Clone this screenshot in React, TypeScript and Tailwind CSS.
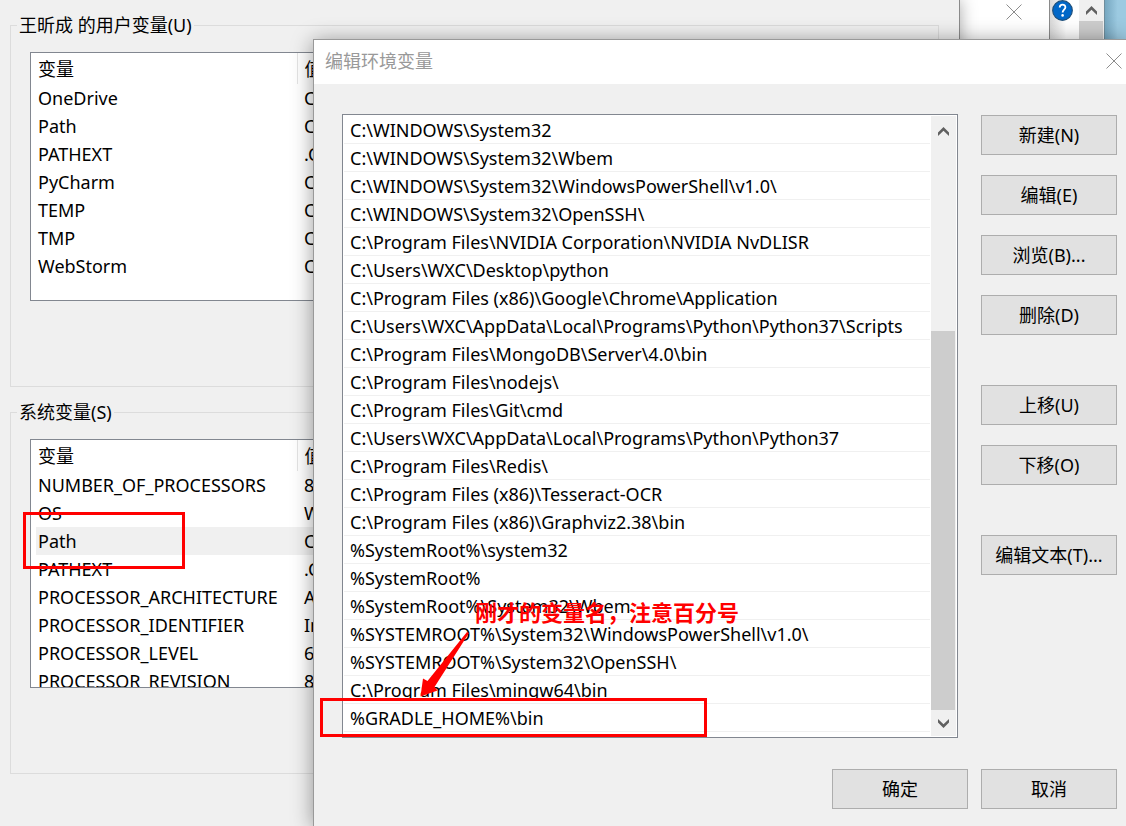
interface Variable {
  name: string
  value: string
  selected?: boolean
}

const USER_VARS: Variable[] = [
  { name: 'OneDrive', value: 'C' },
  { name: 'Path', value: 'C' },
  { name: 'PATHEXT', value: '.C' },
  { name: 'PyCharm', value: 'C' },
  { name: 'TEMP', value: 'C' },
  { name: 'TMP', value: 'C' },
  { name: 'WebStorm', value: 'C' },
]

const SYSTEM_VARS: Variable[] = [
  { name: 'NUMBER_OF_PROCESSORS', value: '8' },
  { name: 'OS', value: 'W' },
  { name: 'Path', value: 'C', selected: true },
  { name: 'PATHEXT', value: '.C' },
  { name: 'PROCESSOR_ARCHITECTURE', value: 'A' },
  { name: 'PROCESSOR_IDENTIFIER', value: 'In' },
  { name: 'PROCESSOR_LEVEL', value: '6' },
  { name: 'PROCESSOR_REVISION', value: '8' },
]

const PATHS = [
  'C:\\WINDOWS\\System32',
  'C:\\WINDOWS\\System32\\Wbem',
  'C:\\WINDOWS\\System32\\WindowsPowerShell\\v1.0\\',
  'C:\\WINDOWS\\System32\\OpenSSH\\',
  'C:\\Program Files\\NVIDIA Corporation\\NVIDIA NvDLISR',
  'C:\\Users\\WXC\\Desktop\\python',
  'C:\\Program Files (x86)\\Google\\Chrome\\Application',
  'C:\\Users\\WXC\\AppData\\Local\\Programs\\Python\\Python37\\Scripts',
  'C:\\Program Files\\MongoDB\\Server\\4.0\\bin',
  'C:\\Program Files\\nodejs\\',
  'C:\\Program Files\\Git\\cmd',
  'C:\\Users\\WXC\\AppData\\Local\\Programs\\Python\\Python37',
  'C:\\Program Files\\Redis\\',
  'C:\\Program Files (x86)\\Tesseract-OCR',
  'C:\\Program Files (x86)\\Graphviz2.38\\bin',
  '%SystemRoot%\\system32',
  '%SystemRoot%',
  '%SystemRoot%\\System32\\Wbem',
  '%SYSTEMROOT%\\System32\\WindowsPowerShell\\v1.0\\',
  '%SYSTEMROOT%\\System32\\OpenSSH\\',
  'C:\\Program Files\\mingw64\\bin',
  '%GRADLE_HOME%\\bin',
]

const ACTION_GROUPS = [
  ['新建(N)', '编辑(E)', '浏览(B)...', '删除(D)'],
  ['上移(U)', '下移(O)'],
  ['编辑文本(T)...'],
]

function CloseIcon() {
  return (
    <svg className="h-4 w-4" viewBox="0 0 16 16" fill="none" stroke="#8c8c8c" strokeWidth={1}>
      <path d="M.5 .5l15 15M15.5 .5l-15 15" />
    </svg>
  )
}

function Chevron({ down }: { down?: boolean }) {
  return (
    <svg className={`h-[9px] w-[11px] ${down ? 'rotate-180' : ''}`} viewBox="0 0 11 9" fill="#606060">
      <path d="M5.5 0L11 5.5V9L5.5 3.8L0 9V5.5z" />
    </svg>
  )
}

function DialogButton({ label }: { label: string }) {
  return (
    <button className="h-10 w-[136px] border border-[#adadad] bg-[#e1e1e1] hover:bg-[#e5f1fb]">
      {label}
    </button>
  )
}

function VariableGroup({ title, rows }: { title: string; rows: Variable[] }) {
  return (
    <fieldset className="min-w-0 border border-[#dcdcdc] pr-5 pb-[85px] pl-[19px]">
      <legend className="-ml-[13px] px-0.5 leading-6">{title}</legend>
      <div className="mt-[15px] h-[249px] overflow-hidden border border-[#828790] bg-white pl-[5px]">
        <table className="w-full table-fixed border-collapse text-left">
          <thead>
            <tr className="h-[31px]">
              <th className="w-[261px] border-r border-[#e5e5e5] py-0 pl-0.5 font-normal">变量</th>
              <th className="py-0 pl-[7px] font-normal">值</th>
            </tr>
          </thead>
          <tbody>
            {rows.map((row) => (
              <tr key={row.name} className={row.selected ? 'h-7 bg-[#f0f0f0]' : 'h-7'}>
                <td className="py-0 pl-0.5 leading-7">{row.name}</td>
                <td className="py-0 pl-[7px] leading-7">{row.value}</td>
              </tr>
            ))}
          </tbody>
        </table>
      </div>
    </fieldset>
  )
}

export default function App() {
  return (
    <div className="relative min-h-screen overflow-hidden bg-[#f0f0f0] font-['Noto_Sans','Noto_Sans_CJK_SC',sans-serif] text-lg leading-7 text-black">
      {/* Windows behind the dialog */}
      <div className="flex min-h-screen">
        <main className="z-10 flex min-w-0 flex-1 flex-col gap-[13px] border-r border-[#8a8a8a] bg-[#f0f0f0] pt-[13px] pr-5 pl-2.5 shadow-[0_0_16px_rgba(0,0,0,0.35)]">
          <VariableGroup title="王昕成 的用户变量(U)" rows={USER_VARS} />
          <VariableGroup title="系统变量(S)" rows={SYSTEM_VARS} />
        </main>
        <div className="flex w-[90px] justify-end border-r border-[#8a8a8a] bg-white pt-1 pr-[27px]">
          <button aria-label="关闭" className="h-4 w-4">
            <CloseIcon />
          </button>
        </div>
        <div className="flex w-[54px] justify-between bg-linear-to-r from-[#d8d8d8] to-white to-30% pl-[2px]">
          <button aria-label="帮助" className="h-[21px] w-[21px]">
            <svg className="h-[21px] w-[21px]" viewBox="0 0 21 21">
              <circle cx="10.5" cy="10.5" r="9.8" fill="#0067c8" stroke="#20517c" strokeWidth="1.2" />
              <path
                d="M7.7 7.5C7.8 3.7 13.4 3.8 13.4 7.2C13.4 9.4 10.6 9.8 10.6 12.4"
                fill="none"
                stroke="#fff"
                strokeWidth="1.8"
              />
              <circle cx="10.6" cy="15.4" r="1.3" fill="#fff" />
            </svg>
          </button>
          <div className="flex w-[25px] flex-col bg-[#f0f0f0]">
            <div className="flex h-[21px] shrink-0 items-center justify-center">
              <Chevron />
            </div>
            <div className="mr-px flex-1 bg-[#cdcdcd]" />
          </div>
        </div>
        <div className="w-[22px] border-l border-[#6f8d9c] bg-linear-to-r from-[#76a7c0] to-[#9ccae1] to-60%" />
      </div>

      {/* Edit dialog */}
      <section
        role="dialog"
        aria-labelledby="dialog-title"
        className="absolute top-[39px] right-0 bottom-0 left-[313px] z-20 flex flex-col border-t border-l border-[#999999] bg-[#f0f0f0] shadow-[0_2px_20px_rgba(0,0,0,0.4)]"
      >
        <header className="flex h-11 shrink-0 items-center justify-between bg-white pr-1 pb-0.5 pl-[11px]">
          <h1 id="dialog-title" className="text-[#999999]">编辑环境变量</h1>
          <button aria-label="关闭" className="h-4 w-4">
            <CloseIcon />
          </button>
        </header>

        <div className="flex gap-[23px] pt-[30px] pr-[9px] pl-7">
          <div className="flex min-w-0 flex-1 gap-px border border-[#828790] bg-white p-px">
            <ul className="min-w-0 flex-1 pb-1">
              {PATHS.map((path) => (
                <li key={path} className="h-7 truncate border-b border-[#f0f0f0] pl-1.5">
                  {path}
                </li>
              ))}
            </ul>
            {/* Scrollbar */}
            <div className="flex w-[25px] flex-col bg-[#f0f0f0]">
              <div className="flex h-[30px] items-center justify-center">
                <Chevron />
              </div>
              <div className="flex-1" />
              <div className="mr-px h-[379px] bg-[#cdcdcd]" />
              <div className="flex h-[26px] items-center justify-center">
                <Chevron down />
              </div>
            </div>
          </div>

          <div className="flex flex-col gap-[50px] pt-px">
            {ACTION_GROUPS.map((group) => (
              <div key={group[0]} className="flex flex-col gap-5">
                {group.map((label) => (
                  <DialogButton key={label} label={label} />
                ))}
              </div>
            ))}
          </div>
        </div>

        <footer className="flex justify-end gap-[13px] pt-[31px] pr-[9px] pb-4">
          <DialogButton label="确定" />
          <DialogButton label="取消" />
        </footer>
      </section>

      {/* Red markup */}
      <div className="pointer-events-none absolute top-[512px] left-[23px] z-30 h-[57px] w-[162px] border-3 border-[#ff0000]" />
      <div className="pointer-events-none absolute top-[698px] left-[320px] z-30 h-[39px] w-[387px] border-3 border-[#ff0000]" />
      <p className="pointer-events-none absolute top-[598px] left-[475px] z-30 text-[22px] font-bold whitespace-nowrap text-[#ff0000]">
        刚才的变量名，注意百分号
      </p>
      <svg
        className="pointer-events-none absolute top-[630px] left-[418px] z-30 h-[68px] w-[52px]"
        viewBox="0 0 52 68"
        fill="#ff0000"
      >
        <path d="M49 2L51 3L16.5 57L19.5 60.5L2.5 66.5L5 48.5L9.5 51z" />
      </svg>
    </div>
  )
}
